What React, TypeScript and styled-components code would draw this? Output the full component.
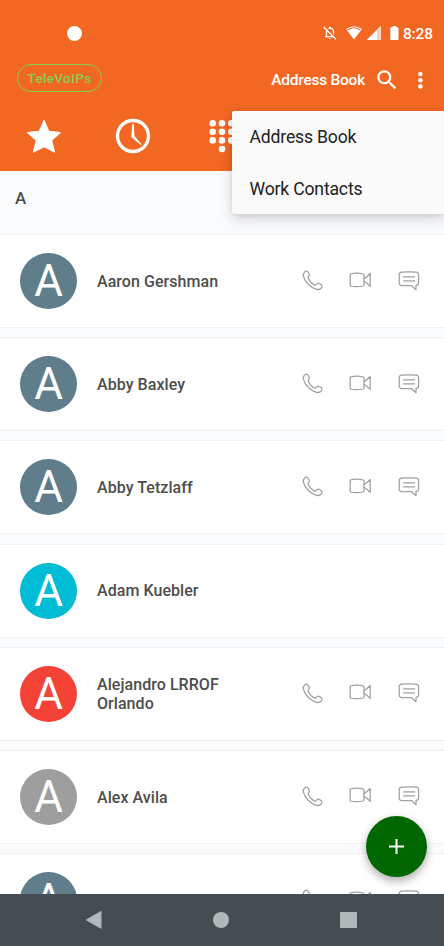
import React from 'react';
import styled, { createGlobalStyle } from 'styled-components';

const GlobalStyle = createGlobalStyle`
  *, *::before, *::after { box-sizing: border-box; }
  body { margin: 0; font-family: Roboto, sans-serif; }
  svg { display: block; flex: none; }
  button { border: 0; padding: 0; background: none; font: inherit; color: inherit; }
`;

const Screen = styled.main`
  position: relative;
  display: flex;
  flex-direction: column;
  width: 444px;
  height: 946px;
  overflow: hidden;
  background: #fafbfd;
`;

const Header = styled.header`
  flex: none;
  height: 171px;
  background: #f26722;
  color: #fff;
`;

const StatusBar = styled.div`
  display: flex;
  align-items: center;
  height: 60px;
  padding: 6px 11px 0 67px;
`;

const Camera = styled.span`
  width: 15px;
  height: 15px;
  margin-right: auto;
  border-radius: 50%;
  background: #fff;
`;

const StatusIcons = styled.div`
  display: flex;
  align-items: center;
  margin-right: 4px;
`;

const Time = styled.time`
  margin-top: 1px;
  font-size: 15.5px;
  font-weight: 500;
  line-height: 20px;
  letter-spacing: -0.1px;
`;

const TitleBar = styled.div`
  display: flex;
  align-items: center;
  height: 40px;
  padding: 0 11px 0 17px;
`;

const Brand = styled.span`
  width: 85px;
  height: 28px;
  margin: -4px auto 0 0;
  border: 1px solid #83cf50;
  border-radius: 14px;
  color: #83cf50;
  font-size: 13.6px;
  font-weight: 500;
  line-height: 27px;
  letter-spacing: 0.3px;
  text-align: center;
`;

const Title = styled.h1`
  margin: 0 9px 0 0;
  font-size: 15.5px;
  font-weight: 500;
  line-height: 20px;
  letter-spacing: -0.25px;
`;

const HeaderButton = styled.button<{ $gap?: number }>`
  margin-left: ${(p) => p.$gap ?? 0}px;
`;

const Tabs = styled.nav`
  display: grid;
  grid-template-columns: repeat(5, 1fr);
  height: 71px;
`;

const Tab = styled.button`
  display: flex;
  align-items: center;
  justify-content: center;
`;

const List = styled.section`
  display: flex;
  flex: 1;
  min-height: 0;
  flex-direction: column;
  gap: 9.2px;
  overflow: hidden;
`;

const SectionTitle = styled.h2`
  flex: none;
  height: 63px;
  margin: 0 0 -9.2px;
  padding: 17px 15px 0;
  color: #4d4d4d;
  font-size: 17px;
  font-weight: 500;
  line-height: 20px;
`;

const Row = styled.article`
  display: flex;
  flex: none;
  align-items: center;
  height: 94px;
  padding: 0 21px 0 20.4px;
  border-top: 1px solid #f0f1f2;
  border-bottom: 1px solid #f0f1f2;
  background: #fff;
`;

const Avatar = styled.span<{ $color: string }>`
  flex: none;
  width: 56.4px;
  height: 56px;
  border-radius: 50%;
  background: ${(p) => p.$color};
  color: #fff;
  font-size: 44px;
  line-height: 56px;
  text-align: center;
`;

const Name = styled.span`
  width: 150px;
  margin: 0.8px auto 0 20.2px;
  color: #4d4d4d;
  font-size: 16px;
  font-weight: 500;
  line-height: 19px;
  letter-spacing: 0.06px;
`;

const Actions = styled.div`
  display: flex;
  align-items: center;
  gap: 24.5px;
`;

const Menu = styled.div`
  position: absolute;
  top: 111px;
  left: 232px;
  width: 213px;
  height: 103px;
  border-radius: 2px;
  background: #fafafa;
  box-shadow: 0 5px 14px rgba(0, 0, 0, 0.16), 0 1px 4px rgba(0, 0, 0, 0.08);
`;

const MenuItem = styled.button`
  display: block;
  width: 100%;
  height: 51.5px;
  padding: 0 17.5px;
  color: #212121;
  font-size: 17.6px;
  line-height: 53px;
  letter-spacing: -0.18px;
  text-align: left;
`;

const AddButton = styled.button`
  position: absolute;
  top: 816px;
  left: 366px;
  display: flex;
  align-items: center;
  justify-content: center;
  width: 61px;
  height: 61px;
  border-radius: 50%;
  background: #060;
  box-shadow: 0 5px 8px rgba(0, 0, 0, 0.24), 0 1px 8px rgba(0, 0, 0, 0.1);
`;

const SystemNav = styled.footer`
  z-index: 1;
  display: grid;
  flex: none;
  grid-template-columns: repeat(3, 127.5px);
  justify-content: center;
  place-items: center;
  height: 52px;
  padding-right: 1.6px;
  background: #454d52;
`;

const lineProps = {
  fill: 'none',
  stroke: '#a0a0a0',
  strokeWidth: 1.25,
  strokeLinejoin: 'round' as const,
  strokeLinecap: 'round' as const,
};

const BellOffIcon = () => (
  <svg width="14" height="14" viewBox="0 0 14 14">
    <path d="M3.5 10V5.8Q3.7 2.5 7 2.1Q10.5 2.5 10.5 5.8V10M2 10.7H12" fill="none" stroke="#fff" strokeWidth="1.3" />
    <path d="M6 2.5V1.2Q7 0 8 1.2V2.5M5.7 12H8.3Q7 14.2 5.7 12" fill="#fff" />
    <path d="M2.2.3L14 13" stroke="#f26722" strokeWidth="1.3" />
    <path d="M.6 1L13 13.3" stroke="#fff" strokeWidth="1.3" />
  </svg>
);

const WifiIcon = () => (
  <svg width="16" height="14" viewBox="0 0 16 14">
    <path d="M0 3Q8-2.7 16 3L8 13.5Z" fill="#fff" />
    <path d="M1.7 4Q8-.5 14.3 4" fill="none" stroke="#f26722" strokeWidth="1.2" />
  </svg>
);

const SignalIcon = () => (
  <svg width="14" height="14" viewBox="0 0 14 14">
    <path d="M0 14L13.5.5V14Z" fill="#fbd0b9" />
    <path d="M0 14L10 4V14Z" fill="#fff" />
    <path d="M0 14L13.5.5V14" fill="none" stroke="#fff" strokeWidth=".6" />
  </svg>
);

const BatteryIcon = () => (
  <svg width="9" height="14" viewBox="0 0 9 14">
    <path d="M2.7 0H6.2V1.3H7.6Q8.5 1.3 8.5 2.2V13Q8.5 14 7.6 14H1.2Q.3 14 .3 13V2.2Q.3 1.3 1.2 1.3H2.7Z" fill="#fff" />
  </svg>
);

const SearchIcon = () => (
  <svg width="26" height="26" viewBox="0 0 24 24" fill="#fff">
    <path d="M15.5 14h-.79l-.28-.27A6.47 6.47 0 0 0 16 9.5 6.5 6.5 0 1 0 9.5 16c1.61 0 3.09-.59 4.23-1.57l.27.28v.79l5 4.99L20.49 19zm-6 0a4.5 4.5 0 1 1 0-9 4.5 4.5 0 0 1 0 9z" />
  </svg>
);

const MoreIcon = () => (
  <svg width="24" height="24" viewBox="0 0 24 24" fill="#fff">
    <circle cx="11.4" cy="6" r="2.25" />
    <circle cx="11.4" cy="12.3" r="2.25" />
    <circle cx="11.4" cy="18.6" r="2.25" />
  </svg>
);

const StarIcon = () => (
  <svg width="36" height="36" viewBox="0 0 36 36">
    <path
      d="M18 2.5L22.7 13.3L34.2 14.5L25.6 22.3L28.5 34L18 28.7L7.5 34L10.3 22.3L1.6 14.5L13.3 13.3Z"
      fill="#fff"
      stroke="#fff"
      strokeWidth="1.2"
      strokeLinejoin="round"
    />
  </svg>
);

const ClockIcon = () => (
  <svg width="36" height="36" viewBox="0 0 36 36">
    <circle cx="18" cy="18" r="15.5" fill="none" stroke="#fff" strokeWidth="3.3" />
    <path d="M17.2 6H18.8L19.5 18L26.5 26.3L25.8 27L16.7 19.6Q16.2 19 16.4 18Z" fill="#fff" />
  </svg>
);

const keypadDots = [
  [8.7, 5.3], [18, 5.3], [27.3, 5.3],
  [8.7, 13.8], [18, 13.8], [27.3, 13.8],
  [8.7, 22.4], [18, 22.4], [27.3, 22.4],
  [18, 31],
];

const KeypadIcon = () => (
  <svg width="36" height="36" viewBox="0 0 36 36" fill="#fff">
    {keypadDots.map(([x, y]) => (
      <circle key={`${x}-${y}`} cx={x} cy={y} r="3.3" />
    ))}
  </svg>
);

const PhoneIcon = () => (
  <svg width="22" height="22" viewBox="0 0 22 22" {...lineProps}>
    <path d="M2.8 1.8C3.8.9 5.3 1 6 2L7.2 4.4C7.6 5.2 7.3 6 6.7 6.6C6.1 7.1 6 7.8 6.4 8.7C7.5 11.2 9.6 13.3 12.2 14.9C13.2 15.5 14 15.1 14.4 14.3C14.9 13.4 15.9 12.9 16.8 13.3L18.8 14.4C20.1 15.2 20.4 16.7 19.4 17.8C18.1 19.3 16.3 19.8 14.4 19.3C8.2 17.3 3 12.1 1.5 6.3C1 4.4 1.4 3 2.8 1.8Z" />
  </svg>
);

const VideoIcon = () => (
  <svg width="23" height="18" viewBox="0 0 23 18" {...lineProps}>
    <path d="M1.2 3Q7.8 1.2 14.3 3Q15 3.2 15 4V14Q15 14.8 14.3 15Q7.8 16.4 1.2 15Z" />
    <path d="M15 7.8C17 6.7 18.5 5.3 21.2 2.5V15.3C18.7 12.6 17 11.2 15 10.2" />
  </svg>
);

const MessageIcon = () => (
  <svg width="22" height="22" viewBox="0 0 22 22" {...lineProps}>
    <path d="M3.8 2.2Q11 1.5 18.2 2.2Q20.6 2.4 20.6 4.7V12.7Q20.6 15.3 18 15.4V19.8L13.4 15.5H3.8Q1.2 15.5 1.2 12.7V4.7Q1.2 2.4 3.8 2.2Z" />
    <path d="M5.6 6.9H16.6M5.6 10.8H16.6" />
  </svg>
);

const PlusIcon = () => (
  <svg width="15" height="15" viewBox="0 0 15 15">
    <path d="M7.5 0V15M0 7.5H15" stroke="#fff" strokeWidth="2" />
  </svg>
);

const BackIcon = () => (
  <svg width="18" height="20" viewBox="0 0 18 20">
    <path d="M1.5 9.2L15.5 1.2Q16.5.8 16.5 1.8V18.2Q16.5 19 15.5 18.4L1.5 10.6Q.5 9.9 1.5 9.2Z" fill="#b2b7b9" />
  </svg>
);

const HomeIcon = () => (
  <svg width="16" height="16" viewBox="0 0 16 16">
    <circle cx="8" cy="8" r="8" fill="#b2b7b9" />
  </svg>
);

const RecentsIcon = () => (
  <svg width="17" height="16" viewBox="0 0 17 16">
    <rect width="17" height="16" rx="1" fill="#b2b7b9" />
  </svg>
);

const StatusSlot = styled.span<{ $gap?: number }>`
  margin-left: ${(p) => p.$gap ?? 0}px;
`;

const ActionButton = styled.button<{ $drop?: number; $width: number }>`
  width: ${(p) => p.$width}px;
  margin-top: ${(p) => p.$drop ?? 0}px;
`;

interface Contact {
  name: string;
  color: string;
  reachable: boolean;
}

const contacts: Contact[] = [
  { name: 'Aaron Gershman', color: '#607d8b', reachable: true },
  { name: 'Abby Baxley', color: '#607d8b', reachable: true },
  { name: 'Abby Tetzlaff', color: '#607d8b', reachable: true },
  { name: 'Adam Kuebler', color: '#00bcd4', reachable: false },
  { name: 'Alejandro LRROF Orlando', color: '#f44336', reachable: true },
  { name: 'Alex Avila', color: '#9e9e9e', reachable: true },
  { name: '', color: '#607d8b', reachable: true },
];

const ContactRow = ({ name, color, reachable }: Contact) => (
  <Row>
    <Avatar $color={color}>A</Avatar>
    <Name>{name}</Name>
    {reachable && (
      <Actions>
        <ActionButton $width={22} aria-label="Call"><PhoneIcon /></ActionButton>
        <ActionButton $width={25} $drop={-3} aria-label="Video call"><VideoIcon /></ActionButton>
        <ActionButton $width={25} $drop={-1} aria-label="Message"><MessageIcon /></ActionButton>
      </Actions>
    )}
  </Row>
);

export default function App() {
  return (
    <>
      <GlobalStyle />
      <Screen>
        <Header>
          <StatusBar>
            <Camera />
            <StatusIcons>
              <StatusSlot><BellOffIcon /></StatusSlot>
              <StatusSlot $gap={9}><WifiIcon /></StatusSlot>
              <StatusSlot $gap={5}><SignalIcon /></StatusSlot>
              <StatusSlot $gap={9}><BatteryIcon /></StatusSlot>
            </StatusIcons>
            <Time>8:28</Time>
          </StatusBar>
          <TitleBar>
            <Brand>TeleVoIPs</Brand>
            <Title>Address Book</Title>
            <HeaderButton aria-label="Search"><SearchIcon /></HeaderButton>
            <HeaderButton $gap={9} aria-label="More options"><MoreIcon /></HeaderButton>
          </TitleBar>
          <Tabs>
            <Tab aria-label="Favorites"><StarIcon /></Tab>
            <Tab aria-label="Recent calls"><ClockIcon /></Tab>
            <Tab aria-label="Keypad"><KeypadIcon /></Tab>
          </Tabs>
        </Header>
        <List>
          <SectionTitle>A</SectionTitle>
          {contacts.map((contact) => (
            <ContactRow key={contact.name} {...contact} />
          ))}
        </List>
        <Menu>
          <MenuItem>Address Book</MenuItem>
          <MenuItem>Work Contacts</MenuItem>
        </Menu>
        <AddButton aria-label="Add contact"><PlusIcon /></AddButton>
        <SystemNav>
          <BackIcon />
          <HomeIcon />
          <RecentsIcon />
        </SystemNav>
      </Screen>
    </>
  );
}
